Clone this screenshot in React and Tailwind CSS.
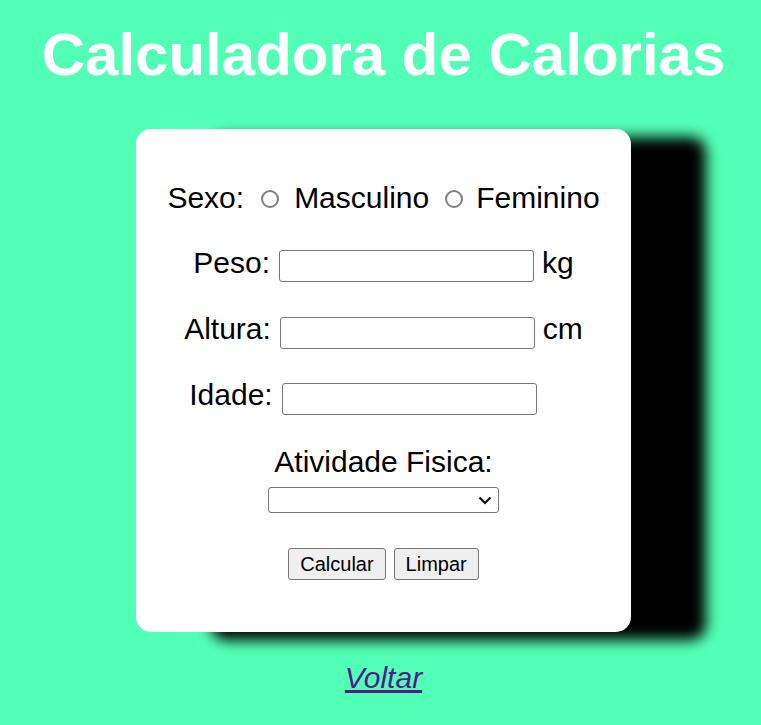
import { useState } from 'react';

function Radio({ name, value, checked, onChange, className = '' }) {
  return (
    <input
      type="radio"
      name={name}
      value={value}
      checked={checked}
      onChange={onChange}
      className={`appearance-none w-[18px] h-[18px] rounded-full border-2 border-[#808080] bg-white ${className}`}
    />
  );
}

function Field({ label, unit, id, value, onChange, labelTop = 'mt-0' }) {
  return (
    <div className="flex items-start justify-center h-[34px] leading-[34px]">
      <label htmlFor={id}>{label}</label>
      <input
        id={id}
        type="text"
        value={value}
        onChange={(e) => onChange(e.target.value)}
        className={`ml-[9px] w-[255px] h-[32px] border border-[#767676] rounded-[3px] bg-white px-1 text-[20px] ${labelTop}`}
      />
      {unit ? (
        <span className="ml-[8px]">{unit}</span>
      ) : (
        <span className="ml-[8px] w-[33px]" />
      )}
    </div>
  );
}

export default function App() {
  const [sexo, setSexo] = useState('');
  const [peso, setPeso] = useState('');
  const [altura, setAltura] = useState('');
  const [idade, setIdade] = useState('');
  const [atividade, setAtividade] = useState('');

  function limpar() {
    setSexo('');
    setPeso('');
    setAltura('');
    setIdade('');
    setAtividade('');
  }

  return (
    <div className="min-h-[725px] bg-[#52ffb7] pl-[6px] font-['Liberation_Sans',Arial,sans-serif] text-black">
      <h1 className="pt-[20px] text-center text-[60px] leading-[69px] font-bold text-white">
        Calculadora de Calorias
      </h1>

      <div className="mt-[40px] mx-auto w-[495px] bg-white rounded-[15px] shadow-[75px_8px_14px_#000] pt-[52px] pb-[52px] text-[30px]">
        <div className="flex items-start justify-center h-[34px] leading-[34px]">
          <span>Sexo:</span>
          <Radio
            name="sexo"
            value="m"
            checked={sexo === 'm'}
            onChange={() => setSexo('m')}
            className="ml-[17px] mt-[9px]"
          />
          <span className="ml-[15px]">Masculino</span>
          <Radio
            name="sexo"
            value="f"
            checked={sexo === 'f'}
            onChange={() => setSexo('f')}
            className="ml-[16px] mt-[9px]"
          />
          <span className="ml-[13px]">Feminino</span>
        </div>

        <div className="mt-[31px]">
          <Field label="Peso:" unit="kg" id="peso" value={peso} onChange={setPeso} labelTop="mt-[4px]" />
        </div>
        <div className="mt-[32px]">
          <Field label="Altura:" unit="cm" id="altura" value={altura} onChange={setAltura} labelTop="mt-[5px]" />
        </div>
        <div className="mt-[32px]">
          <Field label="Idade:" id="idade" value={idade} onChange={setIdade} labelTop="mt-[5px]" />
        </div>

        <div className="mt-[33px] text-center leading-[34px]">Atividade Fisica:</div>
        <div className="mt-[8px] flex justify-center">
          <div className="relative w-[231px] h-[26px]">
            <select
              value={atividade}
              onChange={(e) => setAtividade(e.target.value)}
              className="block appearance-none w-full h-full border border-[#767676] rounded-[3px] bg-white text-[16px] leading-[20px] px-1"
            >
              <option value=""></option>
              <option value="sedentario">Sedentário</option>
              <option value="leve">Leve</option>
              <option value="moderado">Moderado</option>
              <option value="intenso">Intenso</option>
            </select>
            <svg
              viewBox="0 0 14 9"
              className="pointer-events-none absolute right-[7px] top-[9px] w-[14px] h-[9px]"
            >
              <path d="M1.5 1.5 L7 7 L12.5 1.5" fill="none" stroke="#111" strokeWidth="2.2" />
            </svg>
          </div>
        </div>

        <div className="mt-[35px] flex justify-center gap-[8px] text-[20px]">
          <button
            type="button"
            className="h-[32px] px-[11px] bg-[#efefef] border border-[#767676] rounded-[3px]"
          >
            Calcular
          </button>
          <button
            type="button"
            onClick={limpar}
            className="h-[32px] px-[11px] bg-[#efefef] border border-[#767676] rounded-[3px]"
          >
            Limpar
          </button>
        </div>
      </div>

      <div className="mt-[29px] text-center text-[30px] leading-[34px]">
        <a href="#" className="italic underline text-[#551a8b]">
          Voltar
        </a>
      </div>
    </div>
  );
}
